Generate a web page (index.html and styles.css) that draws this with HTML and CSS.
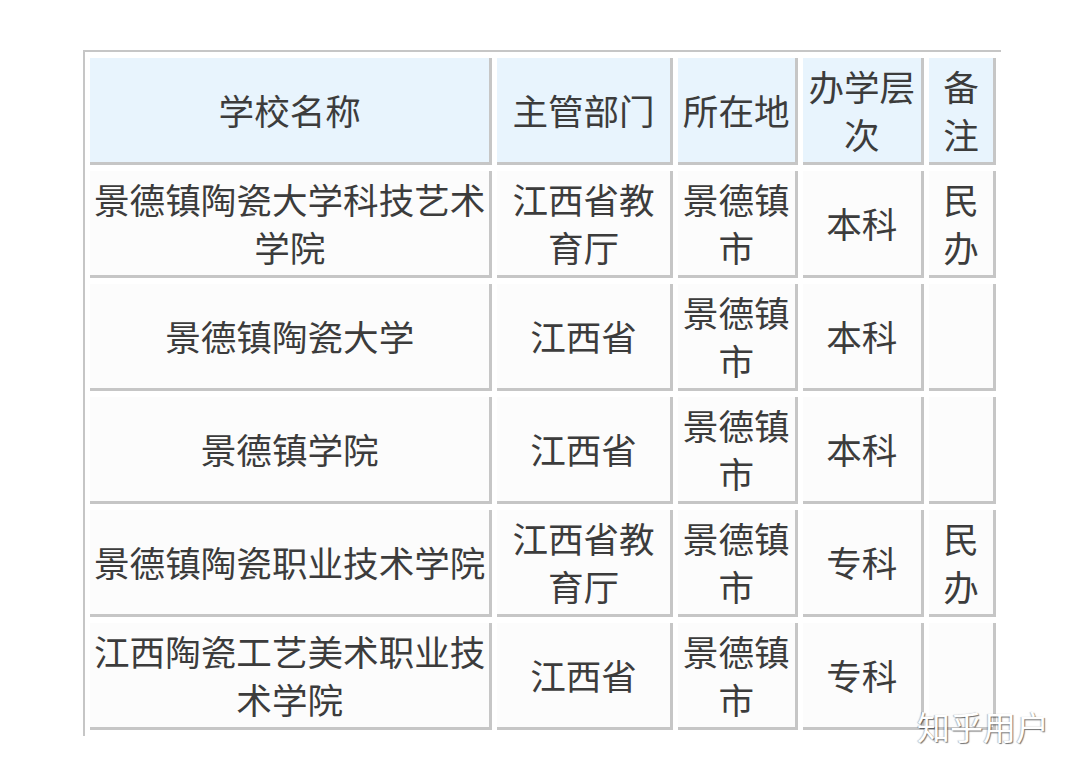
FILE: index.html
```html
<!DOCTYPE html>
<html lang="zh">
<head>
<meta charset="utf-8">
<link rel="stylesheet" href="styles.css">
</head>
<body>
<div class="page">
<table class="grid">
  <thead>
    <tr>
      <th class="c1">学校名称</th>
      <th class="c2">主管部门</th>
      <th class="c3">所在地</th>
      <th class="c4">办学层次</th>
      <th class="c5">备注</th>
    </tr>
  </thead>
  <tbody>
    <tr><td>景德镇陶瓷大学科技艺术学院</td><td>江西省教育厅</td><td>景德镇市</td><td>本科</td><td>民办</td></tr>
    <tr><td>景德镇陶瓷大学</td><td>江西省</td><td>景德镇市</td><td>本科</td><td></td></tr>
    <tr><td>景德镇学院</td><td>江西省</td><td>景德镇市</td><td>本科</td><td></td></tr>
    <tr><td>景德镇陶瓷职业技术学院</td><td>江西省教育厅</td><td>景德镇市</td><td>专科</td><td>民办</td></tr>
    <tr><td>江西陶瓷工艺美术职业技术学院</td><td>江西省</td><td>景德镇市</td><td>专科</td><td></td></tr>
  </tbody>
</table>
<div class="watermark">知乎用户</div>
</div>
</body>
</html>
```

FILE: styles.css
```css
html, body {
  margin: 0;
  padding: 0;
  background: #ffffff;
}
.page {
  position: relative;
  width: 1080px;
  height: 767px;
  padding: 50px 0 0 83px;
  box-sizing: border-box;
  font-family: "Noto Sans CJK SC", "Noto Sans", sans-serif;
  color: #3c3c3c;
}
.grid {
  table-layout: fixed;
  border-collapse: separate;
  border-spacing: 5px 6px;
  border-top: 2px solid #c6c6c6;
  border-left: 2px solid #c6c6c6;
  width: 918px;
}
.grid th, .grid td {
  box-sizing: border-box;
  height: 107px;
  padding: 4px 0;
  border-right: 3px solid #c6c6c6;
  border-bottom: 3px solid #c6c6c6;
  font-size: 35.6px;
  line-height: 48px;
  font-weight: normal;
  text-align: center;
  vertical-align: middle;
  background: #fcfcfc;
  word-break: break-all;
}
.grid th {
  background: #e8f4fd;
}
.c1 { width: 402px; }
.c2 { width: 175px; }
.c3 { width: 120px; }
.c4 { width: 121px; }
.c5 { width: 67px; }
.watermark {
  position: absolute;
  left: 917px;
  top: 704px;
  font-size: 33px;
  line-height: 44px;
  color: #ffffff;
  text-shadow: 1px 1px 1px rgba(0,0,0,0.55), -1px 0 1px rgba(0,0,0,0.25);
}
```
